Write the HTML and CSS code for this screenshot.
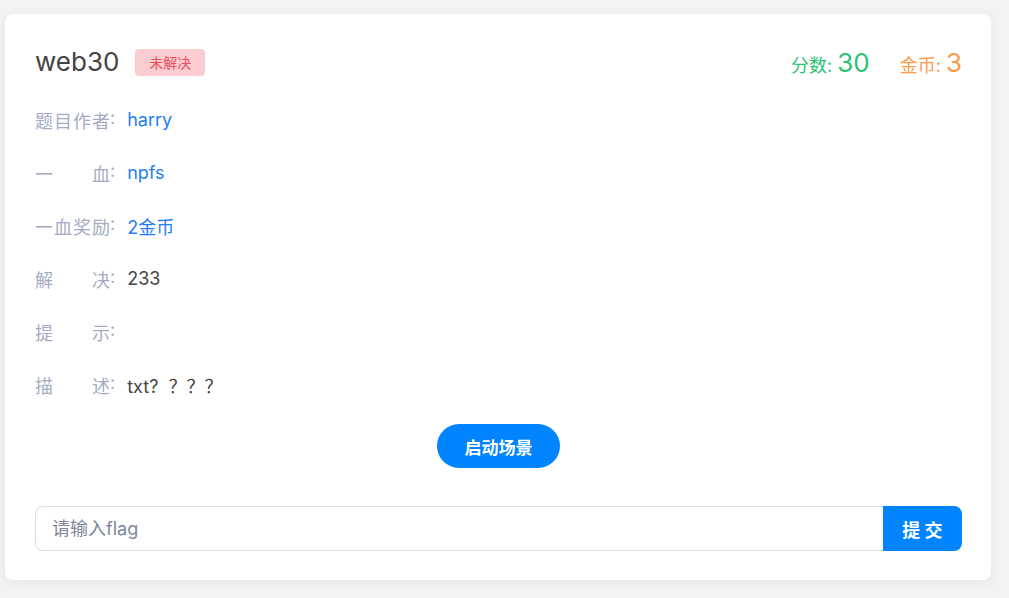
FILE: index.html
```html
<!DOCTYPE html>
<html lang="zh">
<head>
<meta charset="utf-8">
<link rel="stylesheet" href="styles.css">
</head>
<body>
<div class="card">
  <div class="head">
    <div class="title-wrap">
      <span class="title">web30</span>
      <span class="badge">未解决</span>
    </div>
    <div class="stats">
      <span class="score">分数: <b>30</b></span>
      <span class="coin">金币: <b>3</b></span>
    </div>
  </div>
  <div class="rows">
    <div class="row"><span class="label"><span class="lt">题目作者</span>:</span><span class="val blue">harry</span></div>
    <div class="row"><span class="label"><span class="lt">一血</span>:</span><span class="val blue">npfs</span></div>
    <div class="row"><span class="label"><span class="lt">一血奖励</span>:</span><span class="val blue">2金币</span></div>
    <div class="row"><span class="label"><span class="lt">解决</span>:</span><span class="val">233</span></div>
    <div class="row"><span class="label"><span class="lt">提示</span>:</span><span class="val"></span></div>
    <div class="row"><span class="label"><span class="lt">描述</span>:</span><span class="val">txt?&nbsp; ？？？</span></div>
  </div>
  <div class="start-wrap"><button class="start">启动场景</button></div>
  <div class="submit">
    <input class="flag" type="text" placeholder="请输入flag">
    <button class="send">提 交</button>
  </div>
</div>
</body>
</html>
```
FILE: styles.css
```css
html, body {
  margin: 0;
  padding: 0;
  background: #f2f3f5;
  font-family: Inter, "Noto Sans CJK SC", sans-serif;
}
body {
  padding: 14px 18px 0 5px;
  height: 598px;
  box-sizing: border-box;
}
.card {
  width: 986px;
  box-sizing: border-box;
  background: #fff;
  border-radius: 8px;
  box-shadow: 0 2px 12px rgba(0,0,0,0.06);
  padding: 30px 29px 29px 30px;
}
.head {
  display: flex;
  justify-content: space-between;
  align-items: center;
  height: 36px;
}
.title-wrap {
  display: flex;
  align-items: center;
  gap: 16px;
}
.title {
  font-size: 26px;
  color: #444;
  line-height: 32px;
}
.badge {
  background: #fbcdd0;
  color: #e8505c;
  font-size: 14px;
  line-height: 27px;
  height: 27px;
  padding: 0 14px;
  border-radius: 4px;
}
.stats {
  display: flex;
  gap: 30px;
  align-items: baseline;
  font-size: 18px;
}
.stats b { font-weight: 400; font-size: 26px; }
.score { color: #2cc274; }
.coin { color: #ff9a48; }
.rows {
  margin-top: 13px;
}
.row {
  display: flex;
  align-items: center;
  height: 53px;
  font-size: 18px;
}
.label {
  display: flex;
  color: #a5abc3;
  margin-right: 12px;
}
.lt {
  width: 75px;
  text-align: justify;
  text-align-last: justify;
}
.val { color: #444; }
.val.blue { color: #1f7ef5; }
.start-wrap {
  display: flex;
  justify-content: center;
  margin-top: 13px;
}
.start {
  width: 123px;
  height: 44px;
  border: none;
  border-radius: 22px;
  background: #0084ff;
  color: #fff;
  font-size: 17px;
  font-weight: 700;
  font-family: Inter, "Noto Sans CJK SC", sans-serif;
}
.submit {
  display: flex;
  margin-top: 38px;
  height: 45px;
}
.flag {
  flex: 1;
  box-sizing: border-box;
  height: 45px;
  border: 1px solid #dcdfe6;
  border-right: none;
  border-radius: 8px 0 0 8px;
  padding: 0 16px;
  font-size: 18px;
  font-family: Inter, "Noto Sans CJK SC", sans-serif;
  color: #444;
  outline: none;
}
.flag::placeholder { color: #7d869c; }
.send {
  width: 79px;
  height: 45px;
  border: none;
  border-radius: 0 8px 8px 0;
  background: #0084ff;
  color: #fff;
  font-size: 18px;
  font-weight: 700;
  font-family: Inter, "Noto Sans CJK SC", sans-serif;
}
```
